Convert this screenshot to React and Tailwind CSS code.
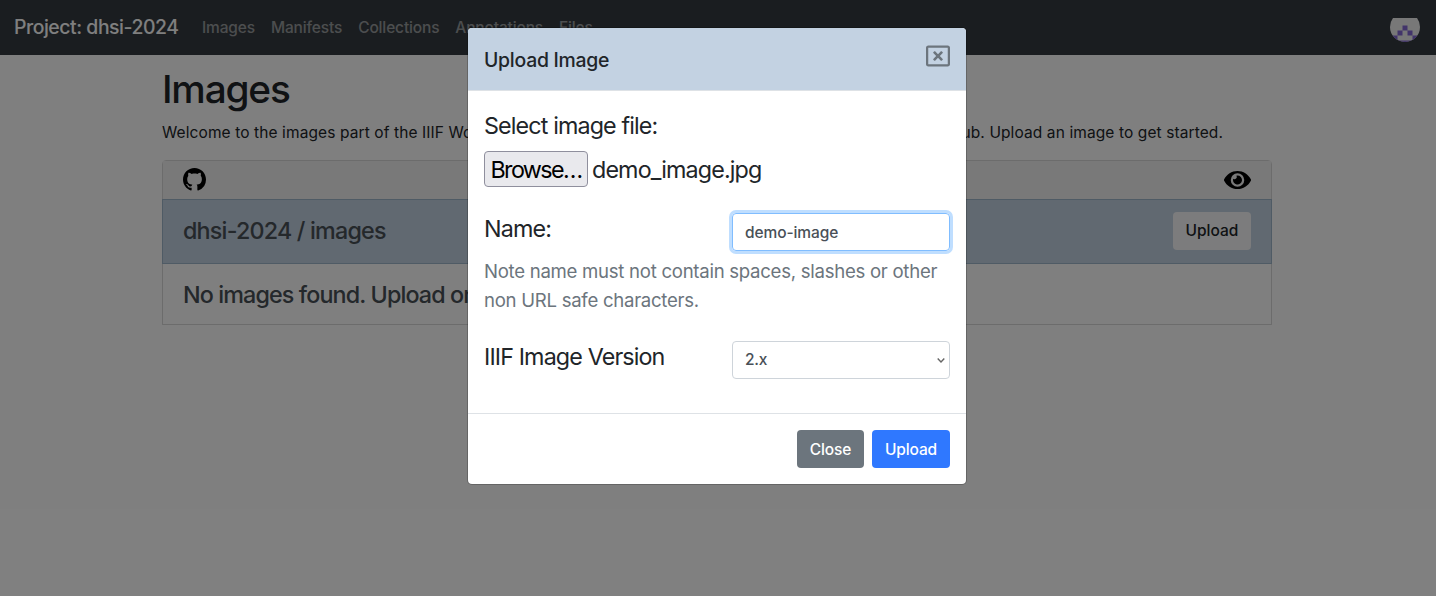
import React from "react";
import { FaEye, FaRegWindowClose } from "react-icons/fa";

function GithubMark() {
  return (
    <svg className="-mt-px size-[23px]" viewBox="0 0 16 16" fill="currentColor">
      <path d="M8 0C3.58 0 0 3.58 0 8c0 3.54 2.29 6.53 5.47 7.59.4.07.55-.17.55-.38 0-.19-.01-.82-.01-1.49-2.01.37-2.53-.49-2.69-.94-.09-.23-.48-.94-.82-1.13-.28-.15-.68-.52-.01-.53.63-.01 1.08.58 1.23.82.72 1.21 1.87.87 2.33.66.07-.52.28-.87.51-1.07-1.78-.2-3.64-.89-3.64-3.95 0-.87.31-1.59.82-2.15-.08-.2-.36-1.02.08-2.12 0 0 .67-.21 2.2.82.64-.18 1.32-.27 2-.27s1.36.09 2 .27c1.53-1.04 2.2-.82 2.2-.82.44 1.1.16 1.92.08 2.12.51.56.82 1.27.82 2.15 0 3.07-1.87 3.75-3.65 3.95.29.25.54.73.54 1.48 0 1.07-.01 1.93-.01 2.2 0 .21.15.46.55.38A8.013 8.013 0 0016 8c0-4.42-3.58-8-8-8z" />
    </svg>
  );
}

function Avatar() {
  return (
    <svg className="h-6 w-[30px]" viewBox="0 6 30 24">
      <defs>
        <clipPath id="avatar">
          <circle cx="15" cy="15" r="15" />
        </clipPath>
      </defs>
      <g clipPath="url(#avatar)">
        <rect width="30" height="30" fill="#f0f0f0" />
        <path fill="#8468d5" d="M12.5 13.5h5v5h-5zM7.5 18.5h5v5h-5zM17.5 18.5h5v5h-5zM0 23.5h7.5v5H0zM22.5 23.5h7.5v5h-7.5zM0 28.5h30v1.5H0z" />
      </g>
    </svg>
  );
}

function Navbar() {
  const links = ["Images", "Manifests", "Collections", "Annotations", "Files"];
  return (
    <nav className="flex h-[55px] items-center bg-[#343a40] pr-4 pl-3.5">
      <span className="w-[164px] pt-px text-[19.4px] tracking-[-0.45px] whitespace-nowrap text-white">Project: dhsi-2024</span>
      <div className="ml-6 flex gap-4 pt-px text-[15.5px] tracking-[-0.15px] text-white/50">
        {links.map((l) => (
          <span key={l}>{l}</span>
        ))}
      </div>
      <div className="ml-auto pt-1">
        <Avatar />
      </div>
    </nav>
  );
}

function Page() {
  return (
    <div className="h-[596px] overflow-hidden bg-white">
      <Navbar />
      <main className="ml-[162px] w-[1110px] pt-2.5">
        <h1 className="text-[38.8px] leading-[48px] font-medium tracking-[-1.2px]">Images</h1>
        <p className="mt-2 flex justify-between pr-[49px] text-[15.5px] leading-6 font-normal tracking-[0.1px] whitespace-nowrap">
          <span>Welcome to the images part of the IIIF Workbench</span>
          <span>in GitHub. Upload an image to get started.</span>
        </p>
        <section className="mt-[15px] flex flex-col rounded-t border border-black/15">
          <div className="flex h-[38px] items-center justify-between bg-[#f2f2f2] px-5 text-black">
            <GithubMark />
            <FaEye className="h-6 w-[27px]" />
          </div>
          <div className="-mx-px flex h-[65px] items-center justify-between border border-[#9fb6cb] bg-[#c3d2e2] px-5 text-[#495057]">
            <span className="text-[23.3px] tracking-[-0.8px]">dhsi-2024 / images</span>
            <span className="-mt-0.5 flex h-[38px] w-[78px] items-center justify-center rounded bg-[#f8f9fa] text-[15.5px] text-[#212529]">Upload</span>
          </div>
          <div className="flex h-[60px] items-center px-5 pt-0.5 text-[23.3px] tracking-[-0.87px] text-[#495057]">No images found. Upload one.</div>
        </section>
      </main>
    </div>
  );
}

function UploadDialog() {
  return (
    <div className="w-[500px] overflow-hidden rounded-[5px] border border-black/20 bg-white bg-clip-padding text-[23.3px] leading-9 font-[420] tracking-[-0.87px]">
      <header className="flex h-[63px] items-start justify-between border-b border-[#dee2e6] bg-[#c3d2e2] px-4">
        <h5 className="pt-[17px] text-[19.4px] leading-[30px] font-medium tracking-[-0.25px]">Upload Image</h5>
        <FaRegWindowClose className="mt-4 size-6 text-[#6c757d]" />
      </header>
      <div className="flex h-[322px] flex-col px-4 pt-4">
        <label className="mt-px">Select image file:</label>
        <div className="mt-[7px] flex h-9 items-center gap-1">
          <button className="flex h-9 w-[104px] items-center justify-center rounded border border-[#8f8f9d] bg-[#e9e9ed] pt-px tracking-[-1.6px] text-black">Browse…</button>
          <span className="pt-0.5">demo_image.jpg</span>
        </div>
        <div className="mt-[26px] flex h-[38px] justify-between">
          <label className="-mt-0.5">Name:</label>
          <div className="flex h-[38px] w-[218px] items-center rounded border border-[#80bdff] px-3 pt-px text-[15.5px] font-[450] tracking-[-0.1px] text-[#495057] ring-3 ring-[#bfdeff]">demo-image</div>
        </div>
        <p className="mt-1.5 text-[18.6px] leading-[28.8px] tracking-[-0.28px] whitespace-nowrap text-[#6c757d]">
          Note name must not contain spaces, slashes or other
          <br />
          non URL safe characters.
        </p>
        <div className="mt-[26px] flex h-[38px] justify-between">
          <label className="-mt-0.5">IIIF Image Version</label>
          <div className="flex h-[38px] w-[218px] items-center justify-between rounded border border-[#ced4da] pt-px pr-1 pl-3 text-[15.5px] font-[450] tracking-[-0.2px] text-[#495057]">
            2.x
            <svg className="h-[5px] w-[8px]" viewBox="0 0 8 5" fill="none" stroke="#666" strokeWidth="1.4">
              <path d="M.7.5L4 4 7.3.5" />
            </svg>
          </div>
        </div>
      </div>
      <footer className="flex h-[71px] items-center justify-end gap-2 border-t border-[#dee2e6] px-4 text-[15.5px] font-medium tracking-[-0.15px] text-white">
        <button className="h-[38px] w-[67px] rounded bg-[#6c757d] pt-px">Close</button>
        <button className="h-[38px] w-[78px] rounded bg-[#2f78ff] pt-px">Upload</button>
      </footer>
    </div>
  );
}

export default function App() {
  return (
    <div className="relative h-[596px] overflow-hidden font-['Inter',sans-serif] font-[450] text-[#212529]">
      <Page />
      <div className="absolute inset-0 flex items-start justify-center bg-black/50 pt-[27px] pr-0.5">
        <UploadDialog />
      </div>
    </div>
  );
}
